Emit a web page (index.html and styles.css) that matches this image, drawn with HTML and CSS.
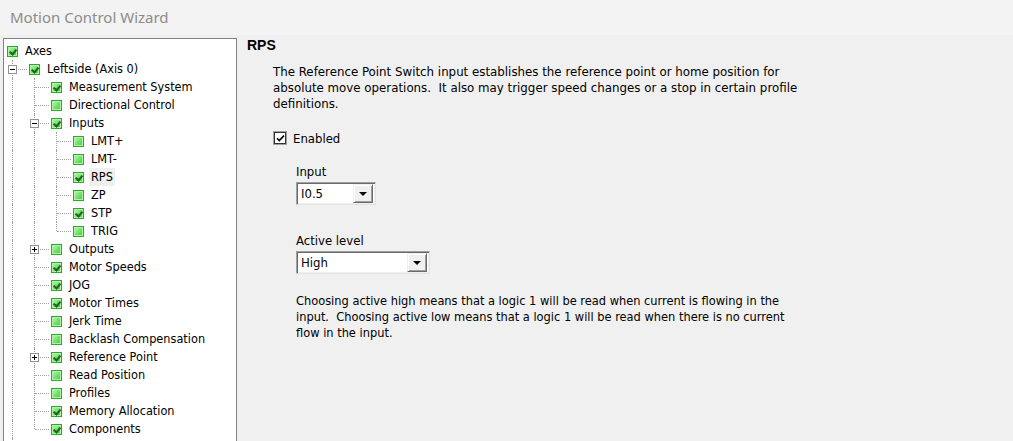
FILE: index.html
```html
<!DOCTYPE html>
<html>
<head>
<meta charset="utf-8">
<link rel="stylesheet" href="styles.css">
</head>
<body>
<div class="titlebar">Motion Control Wizard</div>
<div class="main">
  <div class="tree">
    <div class="row"><span class="cb on"></span><span class="lbl">Axes</span></div>
    <div class="row"><span class="cell t"><span class="exp minus"></span></span><span class="cb on"></span><span class="lbl">Leftside (Axis 0)</span></div>
    <div class="row"><span class="cell v"></span><span class="cell t"></span><span class="cb on"></span><span class="lbl">Measurement System</span></div>
    <div class="row"><span class="cell v"></span><span class="cell t"></span><span class="cb"></span><span class="lbl">Directional Control</span></div>
    <div class="row"><span class="cell v"></span><span class="cell t"><span class="exp minus"></span></span><span class="cb on"></span><span class="lbl">Inputs</span></div>
    <div class="row"><span class="cell v"></span><span class="cell v"></span><span class="cell t"></span><span class="cb"></span><span class="lbl">LMT+</span></div>
    <div class="row"><span class="cell v"></span><span class="cell v"></span><span class="cell t"></span><span class="cb"></span><span class="lbl">LMT-</span></div>
    <div class="row"><span class="cell v"></span><span class="cell v"></span><span class="cell t"></span><span class="cb on"></span><span class="lbl sel">RPS</span></div>
    <div class="row"><span class="cell v"></span><span class="cell v"></span><span class="cell t"></span><span class="cb"></span><span class="lbl">ZP</span></div>
    <div class="row"><span class="cell v"></span><span class="cell v"></span><span class="cell t"></span><span class="cb on"></span><span class="lbl">STP</span></div>
    <div class="row"><span class="cell v"></span><span class="cell v"></span><span class="cell l"></span><span class="cb"></span><span class="lbl">TRIG</span></div>
    <div class="row"><span class="cell v"></span><span class="cell t"><span class="exp plus"></span></span><span class="cb"></span><span class="lbl">Outputs</span></div>
    <div class="row"><span class="cell v"></span><span class="cell t"></span><span class="cb on"></span><span class="lbl">Motor Speeds</span></div>
    <div class="row"><span class="cell v"></span><span class="cell t"></span><span class="cb on"></span><span class="lbl">JOG</span></div>
    <div class="row"><span class="cell v"></span><span class="cell t"></span><span class="cb on"></span><span class="lbl">Motor Times</span></div>
    <div class="row"><span class="cell v"></span><span class="cell t"></span><span class="cb"></span><span class="lbl">Jerk Time</span></div>
    <div class="row"><span class="cell v"></span><span class="cell t"></span><span class="cb"></span><span class="lbl">Backlash Compensation</span></div>
    <div class="row"><span class="cell v"></span><span class="cell t"><span class="exp plus"></span></span><span class="cb on"></span><span class="lbl">Reference Point</span></div>
    <div class="row"><span class="cell v"></span><span class="cell t"></span><span class="cb"></span><span class="lbl">Read Position</span></div>
    <div class="row"><span class="cell v"></span><span class="cell t"></span><span class="cb"></span><span class="lbl">Profiles</span></div>
    <div class="row"><span class="cell v"></span><span class="cell t"></span><span class="cb on"></span><span class="lbl">Memory Allocation</span></div>
    <div class="row"><span class="cell v"></span><span class="cell l"></span><span class="cb on"></span><span class="lbl">Components</span></div>
    <div class="row"><span class="cell v"></span></div>
  </div>
  <div class="content">
    <h1 class="heading">RPS</h1>
    <div class="body">
      <p class="desc">The Reference Point Switch input establishes the reference point or home position for<br>absolute move operations.&nbsp; It also may trigger speed changes or a stop in certain profile<br>definitions.</p>
      <label class="check"><span class="box"><svg width="9" height="9" viewBox="0 0 9 9"><path d="M1 4.2 L3.3 6.6 L8 1.6" fill="none" stroke="#000" stroke-width="1.6"/></svg></span>Enabled</label>
      <div class="field">
        <div class="flabel">Input</div>
        <div class="combo small"><span class="ctext">I0.5</span><span class="cbtn"><span class="arrow"></span></span></div>
      </div>
      <div class="field">
        <div class="flabel">Active level</div>
        <div class="combo wide"><span class="ctext">High</span><span class="cbtn"><span class="arrow"></span></span></div>
      </div>
      <p class="note">Choosing active high means that a logic 1 will be read when current is flowing in the<br>input.&nbsp; Choosing active low means that a logic 1 will be read when there is no current<br>flow in the input.</p>
    </div>
  </div>
</div>
</body>
</html>
```

FILE: styles.css
```css
html, body {
  margin: 0;
  padding: 0;
  height: 100%;
  overflow: hidden;
}
body {
  background: #f0f0f0;
  font-family: "DejaVu Sans Condensed", "DejaVu Sans", sans-serif;
  font-size: 13px;
  color: #000;
}
.titlebar {
  height: 35px;
  box-sizing: border-box;
  background: #f3f3f3;
  color: #8c8c8c;
  font-family: "Noto Sans", "Open Sans", sans-serif;
  font-size: 15px;
  line-height: 34px;
  padding-left: 10px;
}
.main {
  display: flex;
  align-items: flex-start;
}
.tree {
  margin-left: 3px;
  margin-top: 3px;
  width: 234px;
  height: 420px;
  box-sizing: border-box;
  background: #fff;
  border: 1px solid #828282;
  border-bottom: none;
  padding: 3px 0 0 3px;
  overflow: hidden;
  font-size: 12.6px;
}
.row {
  display: flex;
  align-items: center;
  height: 18px;
  white-space: nowrap;
}
.cell {
  position: relative;
  width: 22px;
  height: 18px;
  flex: none;
}
.cell.v::before,
.cell.t::before,
.cell.l::before {
  content: "";
  position: absolute;
  left: 5px;
  top: 0;
  bottom: 0;
  border-left: 1px dotted #a0a0a0;
}
.cell.l::before {
  bottom: 9px;
}
.cell.t::after,
.cell.l::after {
  content: "";
  position: absolute;
  left: 6px;
  right: 2px;
  top: 9px;
  border-top: 1px dotted #a0a0a0;
}
.exp {
  position: absolute;
  left: 1px;
  top: 5px;
  width: 7px;
  height: 7px;
  border: 1px solid #919191;
  background: #fff;
  z-index: 1;
}
.exp::before {
  content: "";
  position: absolute;
  left: 1px;
  top: 3px;
  width: 5px;
  height: 1px;
  background: #000;
}
.exp.plus::after {
  content: "";
  position: absolute;
  left: 3px;
  top: 1px;
  width: 1px;
  height: 5px;
  background: #000;
}
.cb {
  position: relative;
  flex: none;
  width: 9px;
  height: 9px;
  border: 1px solid #2fa82f;
  background: linear-gradient(135deg, #c4f7b8 0%, #6fe06a 55%, #3fcc3f 100%);
  box-shadow: inset 0 0 0 1px #b5f0a8;
}
.cb.on::after {
  content: "";
  position: absolute;
  left: 2px;
  top: 1px;
  width: 3px;
  height: 5px;
  border-right: 2px solid #17691a;
  border-bottom: 2px solid #17691a;
  transform: rotate(40deg);
  transform-origin: 60% 60%;
}
.lbl {
  margin-left: 5px;
  padding: 0 2px;
  line-height: 18px;
}
.lbl.sel {
  background: #efefef;
}
.content {
  padding-left: 10px;
  flex: 1;
}
.heading {
  margin: 0;
  font-family: "Liberation Sans", Arial, sans-serif;
  font-weight: bold;
  font-size: 14px;
  line-height: 16px;
  padding-top: 2px;
}
.body {
  padding-left: 26px;
  font-size: 13px;
}
.desc {
  margin: 11px 0 0 0;
  line-height: 16px;
  font-size: 13.15px;
}
.check {
  display: flex;
  align-items: center;
  margin-top: 18px;
  height: 16px;
}
.box {
  display: flex;
  align-items: center;
  justify-content: center;
  width: 12px;
  height: 12px;
  box-sizing: border-box;
  background: #fff;
  border: 1px solid #333;
  box-shadow: 0 0 0 1px #a0a0a0;
  margin-left: 1px;
  margin-right: 7px;
}
.field {
  padding-left: 23px;
}
.check + .field {
  margin-top: 18px;
}
.field + .field {
  margin-top: 28px;
}
.flabel {
  line-height: 16px;
}
.combo {
  display: flex;
  align-items: center;
  box-sizing: border-box;
  height: 23px;
  margin-top: 2px;
  background: #fff;
  border: 1px solid;
  border-color: #a0a0a0 #e3e3e3 #e3e3e3 #a0a0a0;
  box-shadow: inset 1px 1px 0 #696969, inset -1px -1px 0 #f0f0f0;
  padding: 2px;
}
.combo.small {
  width: 80px;
}
.combo.wide {
  width: 134px;
}
.ctext {
  flex: 1;
  padding-left: 2px;
  line-height: 17px;
}
.cbtn {
  display: flex;
  align-items: center;
  justify-content: center;
  width: 20px;
  height: 19px;
  box-sizing: border-box;
  background: #f0f0f0;
  border: 1px solid;
  border-color: #f0f0f0 #696969 #696969 #f0f0f0;
  box-shadow: inset 1px 1px 0 #fff, inset -1px -1px 0 #a0a0a0;
}
.arrow {
  width: 0;
  height: 0;
  border-left: 4px solid transparent;
  border-right: 4px solid transparent;
  border-top: 4px solid #000;
}
.note {
  margin: 19px 0 0 23px;
  line-height: 16px;
  font-size: 12.7px;
}
```
